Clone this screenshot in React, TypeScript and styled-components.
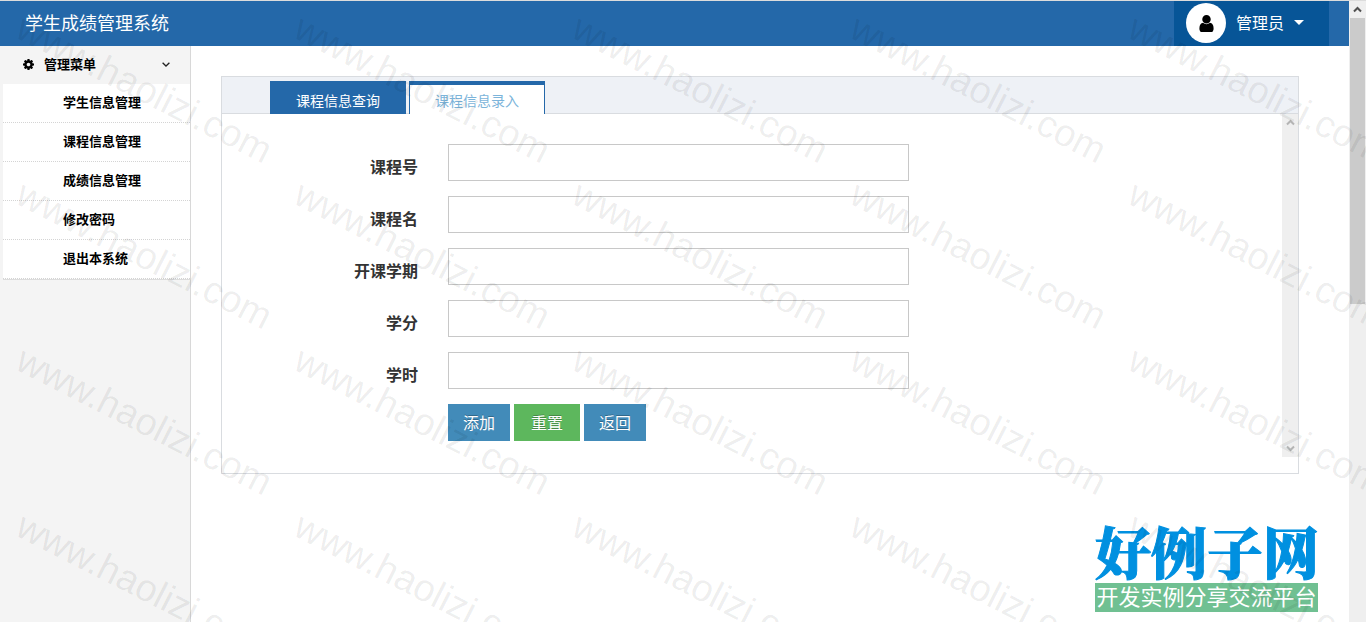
import React from "react";
import styled, { createGlobalStyle, css } from "styled-components";

const GlobalStyle = createGlobalStyle`
  *, *::before, *::after { box-sizing: border-box; }
  body {
    margin: 0;
    background: #fff;
    color: #333;
    font-family: "Open Sans", "Noto Sans CJK SC", sans-serif;
    font-size: 14px;
  }
  button, input { font-family: inherit; margin: 0; }
`;

const Window = styled.div`
  position: relative;
  display: grid;
  grid-template-columns: minmax(0, 1fr) 17px;
  height: 100vh;
  overflow: hidden;
  border-top: 1px solid #dcdcdc;
`;

const Page = styled.div`
  display: flex;
  flex-direction: column;
  min-width: 0;
`;

const Header = styled.header`
  display: flex;
  justify-content: space-between;
  align-items: stretch;
  height: 45px;
  padding: 0 20px 0 25px;
  background: #2468a9;
  color: #fff;
`;

const Brand = styled.h1`
  margin: 0;
  font-size: 18px;
  font-weight: 400;
  line-height: 44px;
`;

const UserMenu = styled.button`
  display: flex;
  align-items: center;
  gap: 10px;
  width: 155px;
  padding: 0 12px 2px;
  border: 0;
  background: #075597;
  color: #fff;
  font-size: 16px;
  line-height: 24px;
`;

const Avatar = styled.span`
  display: flex;
  align-items: center;
  justify-content: center;
  width: 40px;
  height: 40px;
  padding-top: 2px;
  border-radius: 50%;
  background: #fff;
`;

const Body = styled.div`
  display: flex;
  flex: 1;
  min-height: 0;
`;

const Sidebar = styled.nav`
  flex: none;
  width: 191px;
  border-right: 1px solid #d8d8d8;
  background: #f4f4f4;
`;

const MenuToggle = styled.button`
  display: flex;
  align-items: center;
  gap: 10px;
  width: 100%;
  height: 38px;
  padding: 0 20px 2px 23px;
  border: 0;
  background: transparent;
  color: #000;
  font-size: 13px;
  font-weight: 700;
  text-align: left;
`;

const ToggleText = styled.span`
  flex: 1;
  padding-bottom: 2px;
`;

const MenuList = styled.ul`
  margin: 0 0 0 3px;
  padding: 0;
  list-style: none;
  background: #fff;
  border-bottom: 1px solid #dcdcdc;
`;

const MenuItem = styled.li`
  border-bottom: 1px dotted #d4d4d4;
`;

const MenuLink = styled.a`
  display: block;
  height: 38px;
  padding-left: 60px;
  color: #000;
  font-size: 13px;
  font-weight: 700;
  line-height: 36px;
  text-decoration: none;
`;

const Main = styled.main`
  flex: 1;
  min-width: 0;
  padding: 30px 50px 0 30px;
`;

const Panel = styled.section`
  border: 1px solid #d9dce0;
`;

const TabBar = styled.div`
  display: flex;
  align-items: flex-end;
  gap: 3px;
  height: 37px;
  padding-left: 48px;
  border-bottom: 1px solid #d9dce0;
  background: #eef1f6;
`;

const Tab = styled.button<{ $active?: boolean }>`
  width: 136px;
  height: 33px;
  margin-bottom: -1px;
  padding: 6px 0 0;
  border: 0;
  background: #2468a9;
  color: #fff;
  font-size: 14px;
  line-height: 24px;
  ${(p) =>
    p.$active &&
    css`
      padding: 2px 0 0;
      border: 1px solid #2468a9;
      border-top-width: 4px;
      border-bottom: 0;
      background: #fff;
      color: #7cb4da;
    `}
`;

const PanelBody = styled.div`
  display: grid;
  grid-template-columns: minmax(0, 1fr) 16px;
  margin-bottom: 16px;
`;

const Form = styled.form`
  display: flex;
  flex-direction: column;
  gap: 15px;
  padding: 30px 0 16px;
`;

const Field = styled.div`
  display: grid;
  grid-template-columns: 196px minmax(0, 461px);
  column-gap: 30px;
`;

const Label = styled.label`
  padding-top: 11px;
  color: #333;
  font-size: 16px;
  font-weight: 700;
  line-height: 24px;
  text-align: right;
`;

const TextInput = styled.input`
  width: 100%;
  height: 37px;
  padding: 6px 12px;
  border: 1px solid #c8c8c8;
  border-radius: 0;
  background: #fff;
  color: #555;
  font-size: 16px;
  outline: 0;
`;

const Actions = styled.div`
  display: flex;
  gap: 4px;
  margin-left: 226px;
`;

const ActionButton = styled.button<{ $tone?: "green" }>`
  width: ${(p) => (p.$tone ? "66px" : "62px")};
  height: 37px;
  padding: 0;
  border: 0;
  background: ${(p) => (p.$tone ? "#5db75d" : "#428bb9")};
  color: #fff;
  font-size: 16px;
  line-height: 24px;
  text-shadow: 0 -1px 0 rgba(0, 0, 0, 0.25);
`;

const Scrollbar = styled.div<{ $tone: string }>`
  display: flex;
  flex-direction: column;
  justify-content: space-between;
  background: #efefef;
  color: ${(p) => p.$tone};
`;

const ArrowBox = styled.span`
  display: flex;
  align-items: center;
  justify-content: center;
  height: 17px;
`;

const Thumb = styled.span`
  flex: 0 0 46%;
  margin: 0 1px;
  background: #cbcbcb;
`;

const Spacer = styled.span`
  flex: 1;
`;

const SiteLogo = styled.div`
  position: absolute;
  right: 48px;
  bottom: 10px;
  width: 223px;
`;

const LogoName = styled.div`
  color: #0090e0;
  font-family: "Noto Serif CJK SC", "Noto Sans CJK SC", serif;
  font-size: 56px;
  font-weight: 900;
  line-height: 60px;
  padding-bottom: 3px;
  -webkit-text-stroke: 1px #0090e0;
  white-space: nowrap;
`;

const LogoStrip = styled.div`
  height: 29px;
  background: #70c092;
  color: #fff;
  font-size: 22px;
  line-height: 26px;
  text-align: center;
  white-space: nowrap;
`;

const Watermark = styled.div`
  position: absolute;
  inset: 0;
  overflow: hidden;
  pointer-events: none;
`;

const WatermarkRow = styled.div`
  display: flex;
  height: 166px;
`;

const WatermarkCell = styled.div`
  flex: 0 0 278px;
  min-width: 0;
  padding: 7px 0 0 28px;
`;

const WatermarkText = styled.span`
  display: block;
  width: max-content;
  color: rgba(0, 0, 0, 0.075);
  font-family: "Liberation Sans", sans-serif;
  font-size: 38px;
  line-height: 38px;
  transform: rotate(27deg);
  transform-origin: 0 0;
`;

const UserIcon = () => (
  <svg width="15" height="17" viewBox="0 128 1280 1536" fill="#000" aria-hidden="true">
    <path d="M1280 1399q0 109-62.5 187t-150.5 78h-854q-88 0-150.5-78t-62.5-187q0-85 8.5-160.5t31.5-152 58.5-131 94-89 134.5-34.5q131 128 313 128t313-128q76 0 134.5 34.5t94 89 58.5 131 31.5 152 8.5 160.5zm-256-887q0 159-112.5 271.5t-271.5 112.5-271.5-112.5-112.5-271.5 112.5-271.5 271.5-112.5 271.5 112.5 112.5 271.5z" />
  </svg>
);

const CogIcon = () => (
  <svg width="11" height="11" viewBox="128 128 1536 1536" fill="#000" aria-hidden="true">
    <path d="M1152 896q0-106-75-181t-181-75-181 75-75 181 75 181 181 75 181-75 75-181zm512-109v222q0 12-8 23t-20 13l-185 28q-19 54-39 91 35 50 107 138 10 12 10 25t-9 23q-27 37-99 108t-94 71q-12 0-26-9l-138-108q-44 23-91 38-16 136-29 186-7 28-36 28h-222q-14 0-24.5-8.5t-11.5-21.5l-28-184q-49-16-90-37l-141 107q-10 9-25 9-14 0-25-11-126-114-165-168-7-10-7-23 0-12 8-23 15-21 51-66.5t54-70.5q-27-50-41-99l-183-27q-13-2-21-12.5t-8-23.5v-222q0-12 8-23t19-13l186-28q14-46 39-92-40-57-107-138-10-12-10-24 0-10 9-23 26-36 98.5-107.5t94.5-71.5q13 0 26 10l138 107q44-23 91-38 16-136 29-186 7-28 36-28h222q14 0 24.5 8.5t11.5 21.5l28 184q49 16 90 37l142-107q9-9 24-9 13 0 25 10 129 119 165 170 7 8 7 22 0 12-8 23-15 21-51 66.5t-54 70.5q26 50 41 98l183 28q13 2 21 12.5t8 23.5z" />
  </svg>
);

const CaretIcon = () => (
  <svg width="10" height="5" viewBox="0 0 10 5" fill="#fff" aria-hidden="true">
    <path d="M0 0h10L5 5z" />
  </svg>
);

const AngleIcon = () => (
  <svg width="8" height="5" viewBox="0 0 8 5" fill="none" stroke="#222" strokeWidth="1.3" aria-hidden="true">
    <path d="M.6.7 4 4 7.4.7" />
  </svg>
);

const ScrollArrow = ({ down }: { down?: boolean }) => (
  <ArrowBox>
    <svg width="9" height="7" viewBox="0 0 9 7" fill="none" stroke="currentColor" strokeWidth="2" aria-hidden="true">
      <path d={down ? "M1 1.5 4.5 5 8 1.5" : "M1 5.5 4.5 2 8 5.5"} />
    </svg>
  </ArrowBox>
);

const menu = ["学生信息管理", "课程信息管理", "成绩信息管理", "修改密码", "退出本系统"];

const fields = [
  { id: "course-no", label: "课程号" },
  { id: "course-name", label: "课程名" },
  { id: "term", label: "开课学期" },
  { id: "credit", label: "学分" },
  { id: "hours", label: "学时" },
];

export default function App() {
  return (
    <Window>
      <GlobalStyle />
      <Page>
        <Header>
          <Brand>学生成绩管理系统</Brand>
          <UserMenu type="button">
            <Avatar>
              <UserIcon />
            </Avatar>
            <span>管理员</span>
            <CaretIcon />
          </UserMenu>
        </Header>
        <Body>
          <Sidebar>
            <MenuToggle type="button" aria-expanded="true">
              <CogIcon />
              <ToggleText>管理菜单</ToggleText>
              <AngleIcon />
            </MenuToggle>
            <MenuList>
              {menu.map((text) => (
                <MenuItem key={text}>
                  <MenuLink href="#">{text}</MenuLink>
                </MenuItem>
              ))}
            </MenuList>
          </Sidebar>
          <Main>
            <Panel>
              <TabBar role="tablist">
                <Tab type="button" role="tab" aria-selected="false">
                  课程信息查询
                </Tab>
                <Tab type="button" role="tab" aria-selected="true" $active>
                  课程信息录入
                </Tab>
              </TabBar>
              <PanelBody>
                <Form onSubmit={(e) => e.preventDefault()}>
                  {fields.map((f) => (
                    <Field key={f.id}>
                      <Label htmlFor={f.id}>{f.label}</Label>
                      <TextInput id={f.id} type="text" />
                    </Field>
                  ))}
                  <Actions>
                    <ActionButton type="submit">添加</ActionButton>
                    <ActionButton type="reset" $tone="green">
                      重置
                    </ActionButton>
                    <ActionButton type="button">返回</ActionButton>
                  </Actions>
                </Form>
                <Scrollbar $tone="#b4b4b4" aria-hidden="true">
                  <ScrollArrow />
                  <ScrollArrow down />
                </Scrollbar>
              </PanelBody>
            </Panel>
          </Main>
        </Body>
      </Page>
      <Scrollbar $tone="#505050" aria-hidden="true">
        <ScrollArrow />
        <Thumb />
        <Spacer />
      </Scrollbar>
      <SiteLogo>
        <LogoName>好例子网</LogoName>
        <LogoStrip>开发实例分享交流平台</LogoStrip>
      </SiteLogo>
      <Watermark aria-hidden="true">
        {[0, 1, 2, 3].map((row) => (
          <WatermarkRow key={row}>
            {[0, 1, 2, 3, 4].map((col) => (
              <WatermarkCell key={col}>
                <WatermarkText>www.haolizi.com</WatermarkText>
              </WatermarkCell>
            ))}
          </WatermarkRow>
        ))}
      </Watermark>
    </Window>
  );
}
